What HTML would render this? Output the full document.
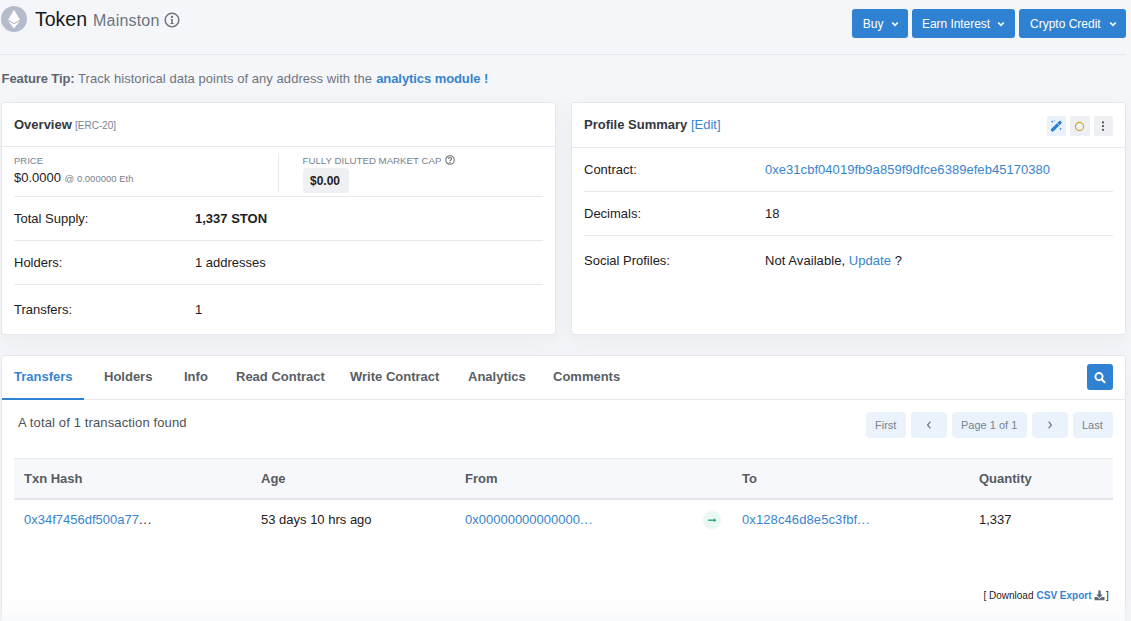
<!DOCTYPE html>
<html><head><meta charset="utf-8">
<style>
*{box-sizing:border-box;margin:0;padding:0}
html,body{width:1131px;height:621px;overflow:hidden}
body{background:#f5f6f9;font-family:"Liberation Sans",sans-serif;color:#1e2022;position:relative}
.t{position:absolute;line-height:1;white-space:nowrap}
.b{font-weight:bold}
.sec{color:#77838f}
.lnk{color:#3884cd}
.card{position:absolute;background:#fff;border:1px solid #e5e7ec;border-radius:3px;box-shadow:0 8px 19px rgba(189,197,209,.18)}
.hl{position:absolute;height:1px;background:#e8e9ee}
.btn{position:absolute;background:#2f82d1;border-radius:3px;top:9px;height:29px}
.pg{position:absolute;top:412px;height:26px;background:#eaf2fb;border-radius:4px}
</style></head><body>

<!-- header -->
<svg style="position:absolute;left:1px;top:6px" width="26" height="26" viewBox="0 0 26 26">
<circle cx="13" cy="13" r="13" fill="#b4bccb"/>
<path d="M13 3.7 L18.8 13.8 L13 17.1 L7.2 13.8 Z" fill="#fff"/>
<path d="M13 18.3 L18.8 15 L13 22.6 L7.2 15 Z" fill="#fff"/>
</svg>
<div class="t" style="left:35px;top:10.3px;font-size:19.5px;color:#16181a">Token</div>
<div class="t sec" style="left:93px;top:13.3px;font-size:16px;color:#6c757e;letter-spacing:0.2px">Mainston</div>
<svg style="position:absolute;left:164px;top:12px" width="16" height="16" viewBox="0 0 16 16">
<circle cx="8" cy="8" r="6.85" fill="none" stroke="#6c757e" stroke-width="1.45"/>
<circle cx="8" cy="4.9" r="1.2" fill="#6c757e"/>
<path d="M6.6 6.9 H8.8 V11 H9.6 V12 H6.5 V11 H7.3 V7.9 H6.6 Z" fill="#6c757e"/>
</svg>

<div class="btn" style="left:852px;width:56px"></div>
<div class="t" style="left:862.8px;top:18.1px;font-size:12px;color:#fff">Buy</div>
<div class="btn" style="left:912px;width:103px"></div>
<div class="t" style="left:922px;top:18.1px;font-size:12px;color:#fff;letter-spacing:-0.05px">Earn Interest</div>
<div class="btn" style="left:1019px;width:107px"></div>
<div class="t" style="left:1030px;top:18.1px;font-size:12px;color:#fff">Crypto Credit</div>
<svg style="position:absolute;left:891px;top:21px" width="8" height="6" viewBox="0 0 8 6"><path d="M1.2 1.5 L4 4.3 L6.8 1.5" fill="none" stroke="#fff" stroke-width="1.6"/></svg>
<svg style="position:absolute;left:997px;top:21px" width="8" height="6" viewBox="0 0 8 6"><path d="M1.2 1.5 L4 4.3 L6.8 1.5" fill="none" stroke="#fff" stroke-width="1.6"/></svg>
<svg style="position:absolute;left:1109px;top:21px" width="8" height="6" viewBox="0 0 8 6"><path d="M1.2 1.5 L4 4.3 L6.8 1.5" fill="none" stroke="#fff" stroke-width="1.6"/></svg>

<div class="hl" style="left:0;top:54px;width:1126px;background:#e4e6eb"></div>

<div class="t" style="left:1.6px;top:72px;font-size:13px;color:#6c757e;letter-spacing:0.05px"><span class="b" style="color:#5e666e;letter-spacing:-0.1px">Feature Tip:</span> Track historical data points of any address with the <span class="b lnk" style="margin-left:0.5px;letter-spacing:-0.08px">analytics module !</span></div>

<!-- overview card -->
<div class="card" style="left:1px;top:102px;width:555px;height:233px"></div>
<div class="hl" style="left:2px;top:146px;width:553px"></div>
<div class="t b" style="left:14px;top:118px;font-size:13px;color:#34383d">Overview</div>
<div class="t sec" style="left:75px;top:120.5px;font-size:10px">[ERC-20]</div>
<div class="t sec" style="left:14px;top:155.7px;font-size:9.5px">PRICE</div>
<div class="t" style="left:14px;top:171.1px;font-size:13px">$0.0000 <span class="sec" style="font-size:9.5px">@ 0.000000 Eth</span></div>
<div style="position:absolute;left:278px;top:153px;width:1px;height:39px;background:#e8e9ee"></div>
<div class="t sec" style="left:302.5px;top:155.8px;font-size:9.7px">FULLY DILUTED MARKET CAP</div>
<svg style="position:absolute;left:444.5px;top:155px" width="10" height="10" viewBox="0 0 10 10">
<circle cx="5" cy="5" r="4.25" fill="none" stroke="#6a737c" stroke-width="1.1"/>
<path d="M3.5 4 Q3.5 2.5 5 2.5 Q6.6 2.5 6.6 3.8 Q6.6 4.7 5.6 5.1 Q5.05 5.35 5.05 6.2" fill="none" stroke="#6a737c" stroke-width="1.2"/>
<rect x="4.4" y="6.9" width="1.25" height="1.2" fill="#6a737c"/>
</svg>
<div style="position:absolute;left:303px;top:168px;width:46px;height:25px;background:#eef0f3;border-radius:4px"></div>
<div class="t b" style="left:310px;top:174.7px;font-size:12px">$0.00</div>
<div class="hl" style="left:14px;top:196px;width:529px"></div>
<div class="t" style="left:14px;top:212.4px;font-size:13px">Total Supply:</div>
<div class="t b" style="left:195px;top:212.4px;font-size:13px">1,337 STON</div>
<div class="hl" style="left:14px;top:240px;width:529px"></div>
<div class="t" style="left:14px;top:256.2px;font-size:13px">Holders:</div>
<div class="t" style="left:195px;top:256.2px;font-size:13px">1 addresses</div>
<div class="hl" style="left:14px;top:284px;width:529px"></div>
<div class="t" style="left:14px;top:303.3px;font-size:13px">Transfers:</div>
<div class="t" style="left:195px;top:303.3px;font-size:13px">1</div>

<!-- profile card -->
<div class="card" style="left:571px;top:102px;width:555px;height:233px"></div>
<div class="hl" style="left:572px;top:147px;width:553px"></div>
<div class="t b" style="left:584px;top:118px;font-size:13px;color:#34383d">Profile Summary <span class="lnk" style="font-weight:normal">[Edit]</span></div>
<div style="position:absolute;left:1047px;top:116px;width:19px;height:20px;background:#e9f2fb;border-radius:2px"></div>
<div style="position:absolute;left:1070px;top:116px;width:20px;height:20px;background:#eef0f3;border-radius:2px"></div>
<div style="position:absolute;left:1094px;top:116px;width:19px;height:20px;background:#eef0f3;border-radius:2px"></div>
<svg style="position:absolute;left:1050px;top:119px" width="13" height="13" viewBox="0 0 13 13">
<path d="M2.6 10.9 L9.9 3.6" stroke="#2f7fd0" stroke-width="3.3" stroke-linecap="round"/>
<path d="M7.6 4.6 L9 6" stroke="#e9f2fb" stroke-width="0.9"/>
<path d="M2.2 1.2 L2.6 2.3 L3.7 2.7 L2.6 3.1 L2.2 4.2 L1.8 3.1 L0.7 2.7 L1.8 2.3 Z" fill="#2f7fd0"/>
<path d="M10.6 8.4 L11 9.5 L12.1 9.9 L11 10.3 L10.6 11.4 L10.2 10.3 L9.1 9.9 L10.2 9.5 Z" fill="#2f7fd0"/>
<path d="M4.6 0.4 L4.8 1 L5.4 1.2 L4.8 1.4 L4.6 2 L4.4 1.4 L3.8 1.2 L4.4 1 Z" fill="#2f7fd0"/>
</svg>
<svg style="position:absolute;left:1074px;top:121px" width="11" height="11" viewBox="0 0 11 11"><circle cx="5.5" cy="5.5" r="4.1" fill="none" stroke="#d9a53c" stroke-width="1.2"/></svg>
<svg style="position:absolute;left:1100px;top:120px" width="6" height="13" viewBox="0 0 6 13"><circle cx="3" cy="2.4" r="1.15" fill="#4f555c"/><circle cx="3" cy="6.1" r="1.15" fill="#4f555c"/><circle cx="3" cy="9.8" r="1.15" fill="#4f555c"/></svg>
<div class="t" style="left:584px;top:163.2px;font-size:13px">Contract:</div>
<div class="t lnk" style="left:765px;top:163.2px;font-size:13px;letter-spacing:0.04px">0xe31cbf04019fb9a859f9dfce6389efeb45170380</div>
<div class="hl" style="left:584px;top:191px;width:529px"></div>
<div class="t" style="left:584px;top:207px;font-size:13px">Decimals:</div>
<div class="t" style="left:765px;top:207px;font-size:13px">18</div>
<div class="hl" style="left:584px;top:235px;width:529px"></div>
<div class="t" style="left:584px;top:254.2px;font-size:13px">Social Profiles:</div>
<div class="t" style="left:765px;top:254.2px;font-size:13px;letter-spacing:0.06px">Not Available, <span class="lnk">Update</span> ?</div>

<!-- transfers card -->
<div class="card" style="left:1px;top:355px;width:1125px;height:300px"></div>
<div class="hl" style="left:2px;top:399px;width:1123px"></div>
<div style="position:absolute;left:2px;top:398px;width:82px;height:2px;background:#2f82d1"></div>
<div class="t b lnk" style="left:14px;top:370px;font-size:13px">Transfers</div>
<div class="t b" style="left:104px;top:370px;font-size:13px;color:#595e64">Holders</div>
<div class="t b" style="left:184px;top:370px;font-size:13px;color:#595e64">Info</div>
<div class="t b" style="left:236px;top:370px;font-size:13px;color:#595e64">Read Contract</div>
<div class="t b" style="left:350px;top:370px;font-size:13px;color:#595e64">Write Contract</div>
<div class="t b" style="left:468px;top:370px;font-size:13px;color:#595e64">Analytics</div>
<div class="t b" style="left:553px;top:370px;font-size:13px;color:#595e64">Comments</div>
<div style="position:absolute;left:1087px;top:364px;width:26px;height:26px;background:#2f82d1;border-radius:3px"></div>
<svg style="position:absolute;left:1092px;top:369px" width="16" height="16" viewBox="0 0 16 16">
<circle cx="7" cy="7.6" r="3.6" fill="none" stroke="#fff" stroke-width="1.9"/>
<path d="M9.6 10.2 L12.6 13.2" stroke="#fff" stroke-width="2.1" stroke-linecap="round"/>
</svg>

<div class="t" style="left:18px;top:415.6px;font-size:13px;color:#4d5258;letter-spacing:0.13px">A total of 1 transaction found</div>
<div class="pg" style="left:866px;width:40px"></div>
<div class="pg" style="left:911px;width:36px"></div>
<div class="pg" style="left:952px;width:75px"></div>
<div class="pg" style="left:1032px;width:36px"></div>
<div class="pg" style="left:1073px;width:40px"></div>
<div class="t sec" style="left:875px;top:419.5px;font-size:11px">First</div>
<div class="t sec" style="left:961px;top:419.5px;font-size:11px">Page 1 of 1</div>
<div class="t sec" style="left:1082px;top:419.5px;font-size:11px">Last</div>
<svg style="position:absolute;left:925px;top:420px" width="8" height="10" viewBox="0 0 8 10"><path d="M5.4 1.6 L2.6 5 L5.4 8.4" fill="none" stroke="#6f7a85" stroke-width="1.25"/></svg>
<svg style="position:absolute;left:1046px;top:420px" width="8" height="10" viewBox="0 0 8 10"><path d="M2.6 1.6 L5.4 5 L2.6 8.4" fill="none" stroke="#6f7a85" stroke-width="1.25"/></svg>

<div style="position:absolute;left:14px;top:458px;width:1099px;height:42px;background:#f6f8fc;border-top:1px solid #e8e9ee;border-bottom:2px solid #e4e5eb"></div>
<div class="t b" style="left:24px;top:471.7px;font-size:13px;color:#565b61">Txn Hash</div>
<div class="t b" style="left:261px;top:471.7px;font-size:13px;color:#565b61">Age</div>
<div class="t b" style="left:465px;top:471.7px;font-size:13px;color:#565b61">From</div>
<div class="t b" style="left:742px;top:471.7px;font-size:13px;color:#565b61">To</div>
<div class="t b" style="left:979px;top:471.7px;font-size:13px;color:#565b61">Quantity</div>

<div class="t" style="left:24px;top:512.7px;font-size:13px"><span class="lnk">0x34f7456df500a77</span><span style="letter-spacing:0.8px">...</span></div>
<div class="t" style="left:261px;top:512.7px;font-size:13px">53 days 10 hrs ago</div>
<div class="t lnk" style="left:465px;top:512.7px;font-size:13px">0x00000000000000<span style="letter-spacing:0.8px">...</span></div>
<div style="position:absolute;left:703.4px;top:511.4px;width:17.2px;height:17.2px;border-radius:50%;background:#eaf8f3"></div>
<svg style="position:absolute;left:706px;top:515px" width="12" height="10" viewBox="0 0 12 10"><path d="M2 5.2 H8.6" stroke="#2b9f7b" stroke-width="1.35"/><path d="M7.9 3.2 L10.4 5.2 L7.9 7.2 Z" fill="#2b9f7b"/></svg>
<div class="t lnk" style="left:742px;top:512.7px;font-size:13px"><span style="letter-spacing:0.1px">0x128c46d8e5c3fbf</span><span style="letter-spacing:0.8px">...</span></div>
<div class="t" style="left:979px;top:512.7px;font-size:13px">1,337</div>

<div class="t" style="left:983.5px;top:590.5px;font-size:10px">[</div>
<div class="t" style="left:989px;top:590.5px;font-size:10px">Download</div>
<div class="t b lnk" style="left:1036.5px;top:590.5px;font-size:10px">CSV Export</div>
<svg style="position:absolute;left:1094px;top:590px" width="11" height="11" viewBox="0 0 11 11"><path d="M4.3 0.5 H6.7 V4.6 H8.8 L5.5 7.9 L2.2 4.6 H4.3 Z" fill="#5f6670"/><path d="M0.5 7 H3.3 L5.5 9.1 L7.7 7 H10.5 V10.3 H0.5 Z" fill="#5f6670"/></svg>
<div class="t" style="left:1106px;top:590.5px;font-size:10px">]</div>

<div style="position:absolute;left:0;top:598px;width:1131px;height:23px;background:linear-gradient(rgba(245,246,249,0),rgba(245,246,249,0.55))"></div>
</body></html>
